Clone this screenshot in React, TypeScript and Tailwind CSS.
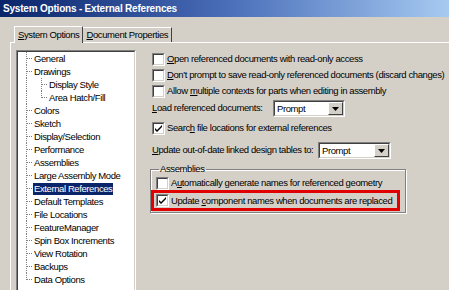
import React from 'react';

type Node = { label: string; level: 0 | 1; last?: boolean; selected?: boolean };

const tree: Node[] = [
  { label: 'General', level: 0 },
  { label: 'Drawings', level: 0 },
  { label: 'Display Style', level: 1 },
  { label: 'Area Hatch/Fill', level: 1, last: true },
  { label: 'Colors', level: 0 },
  { label: 'Sketch', level: 0 },
  { label: 'Display/Selection', level: 0 },
  { label: 'Performance', level: 0 },
  { label: 'Assemblies', level: 0 },
  { label: 'Large Assembly Mode', level: 0 },
  { label: 'External References', level: 0, selected: true },
  { label: 'Default Templates', level: 0 },
  { label: 'File Locations', level: 0 },
  { label: 'FeatureManager', level: 0 },
  { label: 'Spin Box Increments', level: 0 },
  { label: 'View Rotation', level: 0 },
  { label: 'Backups', level: 0 },
  { label: 'Data Options', level: 0, last: true },
];

// dotted tree connector: vertical line on the left, horizontal stub at mid height
const Connector: React.FC<{ last?: boolean }> = ({ last }) => (
  <div className="w-[7px] h-[13px] shrink-0 relative">
    <div className={`border-l border-dotted border-[#808080] ${last ? 'h-[7px]' : 'h-[13px]'}`} />
    <div className="absolute left-0 top-[6px] w-[6px] border-t border-dotted border-[#808080]" />
  </div>
);

const TreeRow: React.FC<{ node: Node }> = ({ node }) => (
  <div className="flex h-[13px] items-center">
    {node.level === 1 ? (
      <>
        <div className="w-[15px] h-[13px] shrink-0 border-l border-dotted border-[#808080]" />
        <Connector last={node.last} />
      </>
    ) : (
      <Connector last={node.last} />
    )}
    <span
      className={`px-[1px] leading-[12px] whitespace-nowrap ${
        node.selected ? 'bg-[#0a246a] text-white' : 'text-black'
      }`}
    >
      {node.label}
    </span>
  </div>
);

const CheckBox: React.FC<{ checked?: boolean }> = ({ checked }) => (
  <div className="w-[13px] h-[13px] shrink-0 border border-t-[#808080] border-l-[#808080] border-r-white border-b-white">
    <div className="w-full h-full bg-white border border-t-[#404040] border-l-[#404040] border-r-[#d4d0c8] border-b-[#d4d0c8] flex items-center justify-center">
      {checked && (
        <svg width="9" height="9" viewBox="0 0 9 9">
          <path d="M1 4 L3 6 L8 1 L8 3 L3 8 L1 6 Z" fill="#000" />
        </svg>
      )}
    </div>
  </div>
);

const CheckRow: React.FC<{ checked?: boolean; h?: string; children: React.ReactNode }> = ({ checked, h = 'h-[16px]', children }) => (
  <div className={`flex items-center ${h} gap-[2px]`}>
    <CheckBox checked={checked} />
    <span className="whitespace-nowrap">{children}</span>
  </div>
);

const Dropdown: React.FC<{ value: string; width: string }> = ({ value, width }) => (
  <div className={`${width} h-[17px] shrink-0 border border-t-[#808080] border-l-[#808080] border-r-white border-b-white`}>
    <div className="h-full bg-white border border-t-[#404040] border-l-[#404040] border-r-[#d4d0c8] border-b-[#d4d0c8] flex items-center">
      <span className="flex-1 pl-[2px] leading-none">{value}</span>
      <div className="w-[15px] h-[13px] bg-[#d4d0c8] border border-t-white border-l-white border-r-[#404040] border-b-[#404040] flex items-center justify-center">
        <svg width="7" height="4" viewBox="0 0 7 4">
          <path d="M0 0 H7 L3.5 4 Z" fill="#000" />
        </svg>
      </div>
    </div>
  </div>
);

const U: React.FC<{ children: React.ReactNode }> = ({ children }) => <span className="underline">{children}</span>;

export default function App() {
  return (
    <div className="w-[449px] h-[290px] overflow-hidden bg-[#d4d0c8] font-['Liberation_Sans',Arial,sans-serif] text-[9.5px] tracking-[-0.4px] text-black">
      {/* Title bar */}
      <div className="h-[17px] bg-gradient-to-r from-[#0a246a] via-[#4a6db8] to-[#a6caf0] flex items-center px-[3px]">
        <span className="text-white font-bold text-[10px] tracking-[-0.2px] whitespace-nowrap">System Options - External References</span>
      </div>

      {/* Tabs */}
      <div className="flex items-end h-[25px] pl-[14px] pt-[8px]">
        <div className="h-[17px] px-[3px] flex items-center bg-[#d4d0c8] border-t border-l border-white border-r border-r-[#404040] relative z-10 -mb-[1px]">
          <span><U>S</U>ystem Options</span>
        </div>
        <div className="h-[15px] px-[3px] flex items-center border-t border-white border-r border-r-[#404040]">
          <span><U>D</U>ocument Properties</span>
        </div>
      </div>

      {/* Tab page */}
      <div className="ml-[10px] border-t border-l border-white flex pt-[7px] pl-[5px]">
        {/* Tree */}
        <div className="w-[120px] h-[260px] border border-t-[#808080] border-l-[#808080] border-r-white shrink-0">
          <div className="h-full bg-white border border-t-[#404040] border-l-[#404040] border-r-[#d4d0c8] pl-[8px]">
            {tree.map((n) => (
              <TreeRow key={n.label} node={n} />
            ))}
          </div>
        </div>

        {/* Options */}
        <div className="flex flex-col pl-[16px] pt-[1px]">
          <CheckRow><U>O</U>pen referenced documents with read-only access</CheckRow>
          <CheckRow><U>D</U>on't prompt to save read-only referenced documents (discard changes)</CheckRow>
          <CheckRow>Allow <U>m</U>ultiple contexts for parts when editing in assembly</CheckRow>
          <div className="flex items-center h-[17px] mt-[1px]">
            <span className="w-[121px] whitespace-nowrap"><U>L</U>oad referenced documents:</span>
            <Dropdown value="Prompt" width="w-[72px]" />
          </div>
          <div className="mt-[3px]">
            <CheckRow checked>Searc<U>h</U> file locations for external references</CheckRow>
          </div>
          <div className="flex items-center h-[17px] mt-[6px]">
            <span className="w-[166px] whitespace-nowrap"><U>U</U>pdate out-of-date linked design tables to:</span>
            <Dropdown value="Prompt" width="w-[73px]" />
          </div>
          <fieldset className="mt-[3px] -ml-[2px] w-[256px] border border-[#808080] shadow-[1px_1px_0_white,inset_1px_1px_0_white] px-[5px] pb-[1px]">
            <legend className="px-[1px] ml-[3px]">Assemblies</legend>
            <CheckRow h="h-[14px]">A<U>u</U>tomatically generate names for referenced geometry</CheckRow>
            <div className="-ml-[5px] w-[249px] border-[3px] border-[#e00000] pl-[2px] h-[21px] flex items-center">
              <CheckRow checked>Update <U>c</U>omponent names when documents are replaced</CheckRow>
            </div>
          </fieldset>
        </div>
      </div>
    </div>
  );
}
